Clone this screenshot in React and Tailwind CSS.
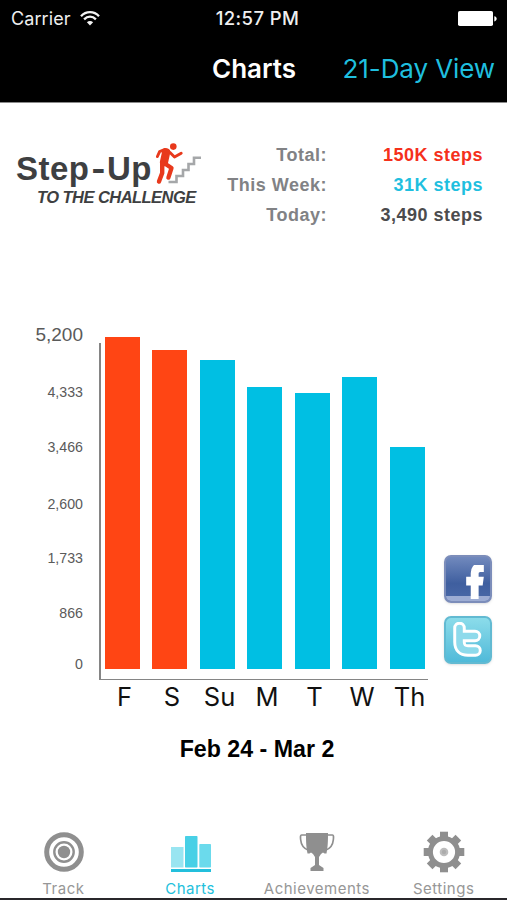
import React from 'react';
import { clsx } from 'clsx';
import { FaFacebookF } from 'react-icons/fa';

const sans = "font-['Liberation_Sans',sans-serif]";

const stats = [
  { label: 'Total:', value: '150K steps', color: 'text-[#f5301b]' },
  { label: 'This Week:', value: '31K steps', color: 'text-[#1fbfdf]' },
  { label: 'Today:', value: '3,490 steps', color: 'text-[#4b4b4d]' },
];

const ticks = [
  { label: '5,200', className: 'text-[19px]' },
  { label: '4,333', className: 'mt-[37px] text-[14.2px]' },
  { label: '3,466', className: 'mt-[35px] text-[14.2px]' },
  { label: '2,600', className: 'mt-[37px] text-[14.2px]' },
  { label: '1,733', className: 'mt-[34px] text-[14.2px]' },
  { label: '866', className: 'mt-[35px] text-[14.2px]' },
  { label: '0', className: 'mt-[31px] text-[14.2px]' },
];

// bar heights are in pixels
const days = [
  { day: 'F', height: 332, weekend: true },
  { day: 'S', height: 319, weekend: true },
  { day: 'Su', height: 309 },
  { day: 'M', height: 282 },
  { day: 'T', height: 276 },
  { day: 'W', height: 292 },
  { day: 'Th', height: 222 },
];

const WifiIcon = () => (
  <svg className="h-[15px] w-5" viewBox="0 0 20 15" fill="none" stroke="#f4f4f4">
    <path d="M1 5.2C6-.2 14-.2 19 5.2" strokeWidth="2.3" />
    <path d="M4.1 8.4C7.6 4.8 12.4 4.8 15.9 8.4" strokeWidth="2.3" />
    <path d="M10 14.4L6.9 11.3C8.6 9.6 11.4 9.6 13.1 11.3Z" fill="#f4f4f4" stroke="none" />
  </svg>
);

const BatteryIcon = () => (
  <svg className="h-[15px] w-[39px]" viewBox="0 0 39 15" fill="#fff">
    <rect width="35" height="15" rx="1.8" />
    <path d="M36.3 5.2C39.5 5.8 39.5 9.8 36.3 10.4Z" />
  </svg>
);

const RunnerIcon = () => (
  <svg className="h-[42px] w-[46px]" viewBox="0 0 46 42" fill="none">
    <path d="M12.5 39H20.5V33H27V27H32.5V21H38V14.8H45" stroke="#a5a7a9" strokeWidth="2.6" />
    <g stroke="#e8391c" strokeLinecap="round" strokeLinejoin="round">
      <path d="M8.5 6.6L3.6 8.6L1.4 13.5" strokeWidth="2.9" />
      <path d="M14 9.5L18.5 14L25.2 10.2" strokeWidth="2.9" />
      <path d="M10.2 9.2L8 19" strokeWidth="8.2" />
      <path d="M9.5 21L15.5 25L12.4 34.6" strokeWidth="4.3" />
      <path d="M6.2 20V30L3 38.6" strokeWidth="4.4" />
    </g>
    <circle cx="17.3" cy="3.6" r="3.3" fill="#e8391c" />
  </svg>
);

const TargetIcon = () => (
  <svg className="h-10 w-10" viewBox="0 0 40 40" fill="none" stroke="#8f8f8f">
    <circle cx="20" cy="20" r="17.3" strokeWidth="5" />
    <circle cx="20" cy="20" r="9.7" strokeWidth="2.4" />
    <circle cx="20" cy="20" r="6.2" fill="#8f8f8f" stroke="none" />
  </svg>
);

const BarsIcon = () => (
  <svg className="h-10 w-10" viewBox="0 0 40 40">
    <rect y="15" width="12.5" height="20.5" fill="#99e5f1" />
    <rect x="14" y="4" width="12.5" height="31.5" rx=".7" fill="#48d0e6" />
    <rect x="28.3" y="12" width="11.7" height="23.5" rx=".7" fill="#6bdaec" />
    <rect y="37" width="40" height="3" fill="#23bfdc" />
  </svg>
);

const TrophyIcon = () => (
  <svg className="h-10 w-10" viewBox="0 0 40 40" fill="#8f8f8f">
    <path d="M9 1H31C31 10 30.8 15 29.5 21.5H27.5L26 20.5L24 22L22 25V33L26.5 36V39H13.5V36L18 33V25L16 22L14 20.5L12.5 21.5H10.5C9.2 15 9 10 9 1Z" />
    <path d="M9.5 3H4.5Q3 3 3.7 8C4.3 14 7 16.5 11 18M30.5 3H35.5Q37 3 36.3 8C35.7 14 33 16.5 29 18" fill="none" stroke="#8f8f8f" strokeWidth="1.7" />
  </svg>
);

const GearIcon = () => (
  <svg className="h-[42px] w-[42px]" viewBox="-21 -21 42 42" fill="#8f8f8f">
    {[0, 45, 90, 135, 180, 225, 270, 315].map((angle) => (
      <path key={angle} d="M-4 -20.3H4V-14H-4Z" transform={`rotate(${angle})`} />
    ))}
    <circle r="13.6" fill="none" stroke="#8f8f8f" strokeWidth="5" />
    <circle r="4.3" fill="#bdbdbd" />
    <circle r="2.2" fill="#acacac" />
  </svg>
);

const TwitterIcon = () => (
  <svg className="h-9 w-9" viewBox="0 0 36 36" fill="none" strokeLinecap="round" strokeLinejoin="round">
    <path d="M9.5 6V20Q9.5 28.5 18 28.5H25.5M10 14H25" stroke="#fff" strokeWidth="12.5" />
    <path d="M9.5 6V20Q9.5 28.5 18 28.5H25.5M10 14H25" stroke="#8edaeb" strokeWidth="6.6" />
  </svg>
);

const tabs = [
  { label: 'Track', icon: TargetIcon },
  { label: 'Charts', icon: BarsIcon, active: true },
  { label: 'Achievements', icon: TrophyIcon },
  { label: 'Settings', icon: GearIcon },
];

const Header = () => (
  <header className="h-[103px] border-b border-[#8a8a8a] bg-black font-[Inter,sans-serif] text-white">
    <div className="grid h-[37px] grid-cols-3 items-center pr-2.5 pl-[11px] text-[18px] text-[#efefef]">
      <div className="flex items-center gap-[9px]">
        <span className="tracking-[0.1px]">Carrier</span>
        <WifiIcon />
      </div>
      <span className="pl-[7px] text-center text-[18.5px] font-medium tracking-[0.4px] whitespace-nowrap">12:57 PM</span>
      <div className="flex justify-end">
        <BatteryIcon />
      </div>
    </div>
    <div className="flex h-[62px] items-center justify-between pr-3 pl-[212px]">
      <h1 className="text-[26px] font-semibold">Charts</h1>
      <button className="text-[26px] tracking-[-0.1px] whitespace-nowrap text-[#1fbfdf]">21-Day View</button>
    </div>
  </header>
);

const Summary = () => (
  <section className="flex h-[207px] justify-between pt-[37px] pr-[24px] pl-4">
    <div className="text-[#3e3f41]">
      <div className="flex h-[46px] items-start">
        <span className="mt-[11px] text-[33px] leading-9 font-bold tracking-[0.5px] whitespace-nowrap">
          Step<span className="mx-[3px] inline-block scale-x-125">-</span>Up
        </span>
        <div className="mt-[3px] ml-[4px]">
          <RunnerIcon />
        </div>
      </div>
      <p className="ml-[21px] text-[16.5px] leading-[22px] font-bold tracking-[-0.55px] whitespace-nowrap italic">TO THE CHALLENGE</p>
    </div>
    <dl className="text-[18px] font-bold tracking-[0.5px]">
      {stats.map(({ label, value, color }) => (
        <div key={label} className="flex h-[30px] items-center justify-end">
          <dt className="text-right text-[#818285]">{label}</dt>
          <dd className={clsx('w-[156px] text-right', color)}>{value}</dd>
        </div>
      ))}
    </dl>
  </section>
);

const Chart = () => (
  <section className="flex h-[370px]">
    <div className="flex w-[83px] flex-col items-end pt-[15px] text-[#5a5a5a]">
      {ticks.map(({ label, className }) => (
        <span key={label} className={clsx('h-5 leading-5', className)}>{label}</span>
      ))}
    </div>
    <div className="mt-[33px] ml-4 flex h-[337px] w-[329px] items-end gap-[12.5px] border-b-[1.5px] border-l-2 border-[#858585] pb-[10px] pl-[3.5px]">
      {days.map(({ day, height, weekend }) => (
        <div
          key={day}
          className={clsx('w-[35px] shrink-0', weekend ? 'bg-[#ff4514]' : 'bg-[#00bfe3]')}
          style={{ height }}
        />
      ))}
    </div>
    <div className="mt-[245px] ml-4 flex flex-col gap-[13px]">
      <button className="flex h-12 w-12 overflow-hidden rounded-[7px] border-2 border-[#7c8dba] bg-linear-to-b from-[#7189bd] via-[#3f5f9f] via-60% to-[#4a69a8] shadow-sm">
        <span className="flex h-full w-full items-end justify-end border-b-[5px] border-[#9dadd4] pr-[6px]">
          <FaFacebookF
            className="-mb-[3px] h-[34px] w-[18px] text-white"
            preserveAspectRatio="none"
            stroke="#fff"
            strokeWidth="40"
          />
        </span>
      </button>
      <button className="flex h-12 w-12 items-center justify-center rounded-[7px] border-2 border-[#62bad2] bg-linear-to-b from-[#8bdcea] to-[#4fbad9] shadow-sm">
        <TwitterIcon />
      </button>
    </div>
  </section>
);

const TabBar = () => (
  <nav className="grid h-[76px] grid-cols-4 border-b-2 border-[#29272b] font-[Inter,sans-serif]">
    {tabs.map(({ label, icon: Icon, active }) => (
      <button key={label} className="flex flex-col items-center">
        <span className="flex h-14 items-center pl-px">
          <Icon />
        </span>
        <span className={clsx('text-[15px] leading-[18px] tracking-[0.5px]', active ? 'text-[#23bfdc]' : 'text-[#979797]')}>
          {label}
        </span>
      </button>
    ))}
  </nav>
);

export default function App() {
  return (
    <main className={clsx('flex h-[900px] w-[507px] flex-col overflow-hidden bg-white', sans)}>
      <Header />
      <Summary />
      <Chart />
      <div className="flex h-[34px] items-center gap-[12.5px] pl-[107px] font-[Inter,sans-serif] text-[25.5px] text-[#111]">
        {days.map(({ day }) => (
          <span key={day} className="flex w-[35px] shrink-0 justify-center">{day}</span>
        ))}
      </div>
      <p className="mt-5 ml-[7px] text-center text-[23.2px] leading-[30px] font-bold text-black">Feb 24 - Mar 2</p>
      <div className="grow" />
      <TabBar />
    </main>
  );
}
